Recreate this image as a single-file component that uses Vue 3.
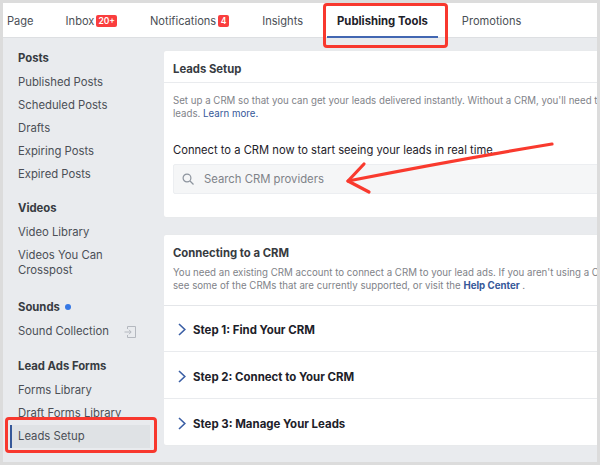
<template>
  <div class="frame">
    <div class="page">
      <nav class="tabs">
        <a v-for="tab in tabs" :key="tab.label" class="tab" :class="{ active: tab.active }">
          {{ tab.label }}<span v-if="tab.badge" class="badge">{{ tab.badge }}</span>
        </a>
      </nav>

      <div class="content">
        <aside class="sidebar">
          <section v-for="group in groups" :key="group.title" class="group">
            <h4 class="group-title">
              {{ group.title }}<span v-if="group.dot" class="dot"></span>
            </h4>
            <a v-for="item in group.items" :key="item.label" class="side-link" :class="{ current: item.current }">
              <span class="side-label">{{ item.label }}</span>
              <svg v-if="item.exit" class="exit-icon" width="12" height="12" viewBox="0 0 12 12" fill="none" stroke="#b4b8bf" stroke-width="1">
                <path d="M3.500 3V.5h8v11h-8V9" />
                <path d="M.5 6h6.500M5 3.800 7.200 6 5 8.200" />
              </svg>
            </a>
          </section>
        </aside>

        <main class="main">
          <section class="card setup-card">
            <header class="card-header">Leads Setup</header>
            <div class="setup-body">
              <p class="muted">Set up a CRM so that you can get your leads delivered instantly. Without a CRM, you'll need to</p>
              <p class="muted">leads. <a class="link">Learn more.</a></p>
              <p class="connect">Connect to a CRM now to start seeing your leads in real time.</p>
              <div class="search">
                <svg width="12" height="12" viewBox="0 0 12 12" fill="none" stroke="#8d949e" stroke-width="1.200">
                  <circle cx="5" cy="5" r="3.900" />
                  <path d="M8 8l3.500 3.500" />
                </svg>
                <span>Search CRM providers</span>
              </div>
            </div>
          </section>

          <section class="card">
            <div class="intro">
              <h3 class="intro-title">Connecting to a CRM</h3>
              <p class="muted">You need an existing CRM account to connect a CRM to your lead ads. If you aren't using a CRM,</p>
              <p class="muted">see some of the CRMs that are currently supported, or visit the <a class="link strong">Help Center</a> .</p>
            </div>
            <div v-for="step in steps" :key="step" class="step">
              <svg width="8" height="13" viewBox="0 0 8 13" fill="none" stroke="#3b5fa5" stroke-width="1.600">
                <path d="M1 1l5.800 5.500L1 12" />
              </svg>
              <span>{{ step }}</span>
            </div>
          </section>
        </main>
      </div>
    </div>

    <div class="mark mark-tab"></div>
    <div class="mark mark-side"></div>
    <svg class="arrow" width="220" height="60" viewBox="0 0 220 60" fill="none" stroke="#f93a2e" stroke-width="3.200" stroke-linecap="round" stroke-linejoin="round">
      <path d="M207 2Q110 18 3 39" />
      <path d="M19 22 3 39l21 11" />
    </svg>
  </div>
</template>

<script setup>
const tabs = [
  { label: 'Page' },
  { label: 'Inbox', badge: '20+' },
  { label: 'Notifications', badge: '4' },
  { label: 'Insights' },
  { label: 'Publishing Tools', active: true },
  { label: 'Promotions' }
]

const groups = [
  {
    title: 'Posts',
    items: [
      { label: 'Published Posts' },
      { label: 'Scheduled Posts' },
      { label: 'Drafts' },
      { label: 'Expiring Posts' },
      { label: 'Expired Posts' }
    ]
  },
  {
    title: 'Videos',
    items: [{ label: 'Video Library' }, { label: 'Videos You Can Crosspost' }]
  },
  {
    title: 'Sounds',
    dot: true,
    items: [{ label: 'Sound Collection', exit: true }]
  },
  {
    title: 'Lead Ads Forms',
    items: [
      { label: 'Forms Library' },
      { label: 'Draft Forms Library' },
      { label: 'Leads Setup', current: true }
    ]
  }
]

const steps = ['Step 1: Find Your CRM', 'Step 2: Connect to Your CRM', 'Step 3: Manage Your Leads']
</script>

<style>
html,
body {
  margin: 0;
  background: #dcdcdc;
}
</style>

<style scoped>
.frame {
  position: relative;
  width: 600px;
  height: 465px;
  box-sizing: border-box;
  padding: 3px;
  overflow: hidden;
  background: #dcdcdc;
  font-family: Inter, "Liberation Sans", sans-serif;
  font-size: 11.300px;
  color: #4b4f56;
}

.page {
  height: 459px;
  background: #e9ebee;
  overflow: hidden;
}

.tabs {
  display: flex;
  height: 35px;
  padding-left: 4px;
  background: #fff;
  border-bottom: 1px solid #dddfe2;
  box-sizing: border-box;
}

.tab {
  display: flex;
  align-items: center;
  box-sizing: border-box;
  height: 35px;
  margin-right: 33px;
  font-size: 11.100px;
  color: #4b4f56;
  white-space: nowrap;
}

.tab:first-child {
  margin-right: 32px;
}

.tab.active {
  font-size: 11.300px;
  font-weight: 700;
  color: #1d2129;
  padding: 2px 10px 0;
  margin: 0 24px 0 -9px;
  border-bottom: 2px solid #4267b2;
}

.badge {
  margin-left: 2px;
  padding: 0 2px;
  height: 12px;
  min-width: 7px;
  text-align: center;
  line-height: 12px;
  font-size: 8.500px;
  font-weight: 600;
  color: #fff;
  background: #fa3e3e;
  border-radius: 2px;
}

.content {
  display: flex;
}

.sidebar {
  width: 161px;
  flex: none;
  padding: 12px 0 0 7px;
  box-sizing: border-box;
}

.group {
  margin-bottom: 14px;
}

.group:nth-child(2) {
  margin-bottom: 17px;
}

.group:nth-child(3) {
  margin-bottom: 15px;
}

.group:last-child {
  margin-bottom: 0;
}

.group-title {
  display: flex;
  align-items: center;
  height: 15px;
  margin: 0 0 6px 8px;
  font-size: 11.300px;
  font-weight: 700;
  color: #373b41;
}

.dot {
  width: 6px;
  height: 6px;
  margin-left: 5px;
  border-radius: 50%;
  background: #3578e5;
}

.side-link {
  display: flex;
  align-items: center;
  padding: 4px 0 4px 8px;
  line-height: 15px;
  color: #4b4f56;
}

.side-label {
  max-width: 112px;
}

.exit-icon {
  margin-left: 15px;
}

.side-link.current {
  width: 140px;
  padding-left: 6px;
  box-sizing: border-box;
  border-left: 2px solid #365899;
  background: #dfe2e5;
}

.main {
  flex: 1;
  min-width: 0;
  padding-top: 13px;
  overflow: hidden;
}

.card {
  width: 470px;
  background: #fff;
  border-radius: 2px;
  box-shadow: 0 0 1px #dddfe2;
}

.setup-card {
  height: 166px;
  margin-bottom: 18px;
}

.card-header {
  height: 31px;
  line-height: 37px;
  padding-left: 9px;
  font-weight: 700;
  color: #373b41;
  border-bottom: 1px solid #e9ebee;
}

.setup-body {
  padding: 11px 9px 0;
}

.muted {
  margin: 0;
  height: 13px;
  line-height: 13px;
  font-size: 9.700px;
  white-space: nowrap;
  color: #7f8389;
}

.link {
  color: #365899;
}

.link.strong {
  font-weight: 700;
}

.connect {
  margin: 23px 0 6px;
  height: 15px;
  line-height: 15px;
  font-size: 11.200px;
  color: #1d2129;
  white-space: nowrap;
}

.search {
  display: flex;
  align-items: center;
  gap: 10px;
  height: 30px;
  padding-left: 8px;
  color: #7f8389;
  background: #f5f6f7;
  border: 1px solid #eceef1;
  border-radius: 2px;
  box-sizing: border-box;
}

.intro {
  height: 71px;
  padding: 11px 9px 0;
  box-sizing: border-box;
  border-bottom: 1px solid #e4e6e9;
}

.intro-title {
  margin: 0 0 5px;
  height: 15px;
  line-height: 15px;
  font-size: 11.300px;
  font-weight: 700;
  color: #373b41;
}

.step {
  display: flex;
  align-items: center;
  gap: 7px;
  height: 46px;
  padding: 2px 0 0 14px;
  font-size: 11.450px;
  font-weight: 700;
  color: #1d2129;
  border-bottom: 1px solid #e9ebee;
  box-sizing: border-box;
}

.step:nth-child(3) {
  height: 47px;
  padding-top: 3px;
}

.step:last-child {
  padding-top: 3px;
  border-bottom: 0;
}

.mark {
  position: absolute;
  box-sizing: border-box;
  border: 3px solid #f8382e;
  border-radius: 4px;
}

.mark-tab {
  left: 323px;
  top: 3px;
  width: 125px;
  height: 45px;
}

.mark-side {
  left: 5px;
  top: 417px;
  width: 152px;
  height: 36px;
}

.arrow {
  position: absolute;
  left: 345px;
  top: 142px;
}
</style>
